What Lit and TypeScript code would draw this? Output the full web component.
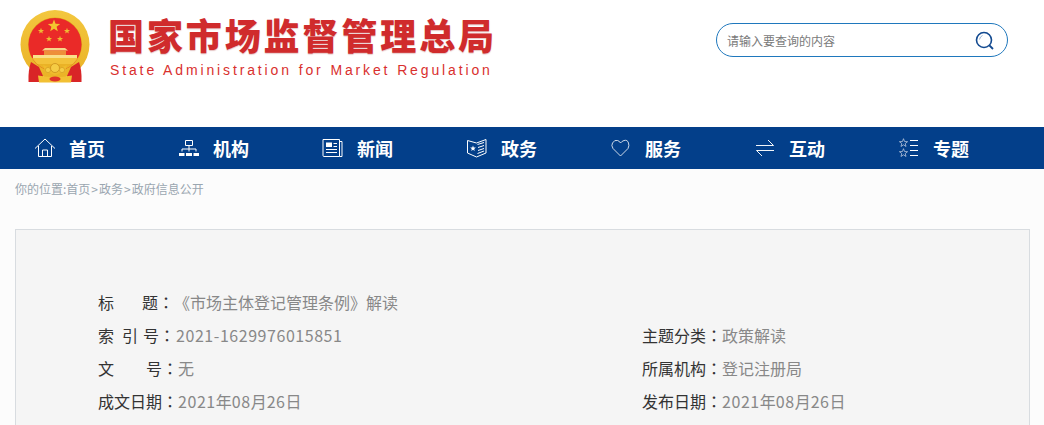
import { LitElement, html, css, svg } from "lit";
import { customElement } from "lit/decorators.js";

const S = (d: string, extra = "") => svg`<path d=${d} fill="none" stroke="#fff" stroke-width="1" opacity=${extra || "1"}/>`;
const star = (cx: number, cy: number, r: number, fill: string, stroke = "none") => {
  const pts: string[] = [];
  for (let i = 0; i < 10; i++) {
    const a = -Math.PI / 2 + (i * Math.PI) / 5;
    const rr = i % 2 ? r * 0.42 : r;
    pts.push(`${(cx + rr * Math.cos(a)).toFixed(2)},${(cy + rr * Math.sin(a)).toFixed(2)}`);
  }
  return svg`<polygon points=${pts.join(" ")} fill=${fill} stroke=${stroke} stroke-width="0.8"/>`;
};

const icons = [
  svg`<svg class="ic" width="22" height="20" viewBox="0 0 22 20">${S("M1 10.500 11 1l10 9.500")}${S("M4.500 8v10.500h13V8")}${S("M8.500 18.500v-6.500h5v6.500")}</svg>`,
  svg`<svg class="ic" width="22" height="20" viewBox="0 0 22 20">${S("M7.500 2.500h7v5h-7z")}${S("M11 7.500v6M4 13.500v-2.500h14v2.500")}<rect x="1" y="15" width="5.500" height="3" fill="#fff"/><rect x="8" y="15" width="6" height="3" fill="#fff"/><rect x="15.500" y="15" width="5.500" height="3" fill="#fff"/></svg>`,
  svg`<svg class="ic" width="22" height="20" viewBox="0 0 22 20">${S("M17.500 18.500H2q-1 0-1-1V1.500h16.500z")}${S("M17.500 3.500h2.500v15h-2.500")}<rect x="4" y="4.500" width="6" height="4.500" fill="#fff"/>${S("M11.500 5.500h3.500M11.500 8.500h3.500M4 11.500h11M4 14.500h11")}</svg>`,
  svg`<svg class="ic" width="22" height="20" viewBox="0 0 22 20">${S("M1.500 2.500 10.500 5 20 1.500V15L10.500 19 1.500 15z")}${star(7, 10.500, 3, "#fff")}${S("M11.500 6.500 18 4.500M12 9.500l6-2M12 12.500l6-2M11.500 15.500l6.500-2.500")}</svg>`,
  svg`<svg class="ic" width="22" height="20" viewBox="0 0 22 20">${S("M10.500 18 3 10.500Q1 7.500 2.500 5 4.500 1.500 7.500 2.500 9.500 3 10.500 5 12 3 14 2.500 17.500 1.500 18.500 5 19.500 7.500 18 10.500z", "0.8")}</svg>`,
  svg`<svg class="ic" width="22" height="20" viewBox="0 0 22 20">${S("M2 7.500h17.500L14 2", "0.95")}${S("M20 12.500H2.500L8 18", "0.95")}</svg>`,
  svg`<svg class="ic" width="22" height="20" viewBox="0 0 22 20">${star(5.500, 5, 4.300, "none", "#b9c7dc")}${star(5.500, 15, 4.300, "none", "#b9c7dc")}${S("M12 2.500h8M12 7.500h8M12 12.500h8M12 17.500h8", "1")}</svg>`,
];

const navItems = ["首页", "机构", "新闻", "政务", "服务", "互动", "专题"];

const emblem = svg`<svg class="emblem" width="70" height="74" viewBox="0 0 70 74">
  <defs>
    <linearGradient id="gold" x1="0" y1="0" x2="0" y2="1"><stop offset="0" stop-color="#f3c73f"/><stop offset="1" stop-color="#eab226"/></linearGradient>
    <clipPath id="disk"><circle cx="35" cy="34.500" r="26.500"/></clipPath>
  </defs>
  <circle cx="35" cy="34.500" r="34.500" fill="url(#gold)"/>
  <circle cx="35" cy="34.500" r="27" fill="#dfa01c"/>
  <circle cx="35" cy="34.500" r="26.500" fill="#ea2a28"/>
  ${star(34, 16, 6.500, "#f3c52f")}
  ${star(21, 21, 3.200, "#efbb33")}
  ${star(47, 21, 3.200, "#efbb33")}
  ${star(29, 29, 3.200, "#efbb33")}
  ${star(40, 29, 3.200, "#efbb33")}
  <g clip-path="url(#disk)">
    <path d="M25 38h20l3 2.500H22z" fill="#f7d68a"/>
    <path d="M24 40.500h22V45H24z" fill="#ee8f3a"/>
    <path d="M13 45h44v3H13z" fill="#fae08a"/>
    <path d="M11 48h48v6H11z" fill="#f3c23a"/>
    <path d="M0 54h70v14H0z" fill="#eab226"/>
  </g>
  <path d="M11 52q-3 8-2.500 20H21l2-6-4-9z" fill="#d92527"/>
  <path d="M59 52q3 8 2.500 20H49l-2-6 4-9z" fill="#d92527"/>
  <path d="M23 55q12 6 24 0l-2 6-10 4-10-4z" fill="#f0bb2c"/>
  <circle cx="35" cy="58" r="4.500" fill="#f5cc45" stroke="#c98e1d" stroke-width="0.800"/>
  <circle cx="28" cy="60" r="2.600" fill="#f5cc45" stroke="#c98e1d" stroke-width="0.500"/>
  <circle cx="42" cy="60" r="2.600" fill="#f5cc45" stroke="#c98e1d" stroke-width="0.500"/>
  <path d="M18 65.500q17 3 34 0l-1 7H19z" fill="#f2c033"/>
  <ellipse cx="35" cy="69" rx="5.500" ry="2.400" fill="#e0322a"/>
</svg>`;

@customElement("app-root")
export class AppRoot extends LitElement {
  static styles = css`
    :host {
      display: block;
      width: 1044px;
      height: 425px;
      overflow: hidden;
      background: #fcfcfc;
      font-family: "Noto Sans CJK SC", "Liberation Sans", sans-serif;
    }
    .header {
      height: 127px;
      background: #fff;
      box-sizing: border-box;
      padding: 7px 36px 0 20px;
      display: flex;
      justify-content: space-between;
      align-items: flex-start;
    }
    .brand {
      display: flex;
      gap: 18px;
      padding-top: 2px;
    }
    .emblem {
      display: block;
      margin-top: 1px;
    }
    .names {
      display: flex;
      flex-direction: column;
    }
    .cn {
      font-size: 36px;
      line-height: 50px;
      font-weight: 900;
      letter-spacing: 2.900px;
      color: #d02b2c;
      text-shadow: 0 1px 1px rgba(150, 20, 20, 0.25);
      white-space: nowrap;
    }
    .en {
      font-family: "Liberation Sans", sans-serif;
      font-size: 14px;
      line-height: 16px;
      margin-top: 3px;
      letter-spacing: 2.870px;
      color: #d9302e;
      padding-left: 2px;
      white-space: nowrap;
    }
    .search {
      width: 292px;
      height: 34px;
      margin-top: 16px;
      box-sizing: border-box;
      border: 1px solid #1f78bd;
      border-radius: 17px;
      display: flex;
      align-items: center;
      justify-content: space-between;
      padding: 0 11px 0 10px;
      font-size: 12px;
      color: #7a7a7a;
    }
    .search svg {
      display: block;
      margin-top: 2px;
    }
    .nav {
      height: 42px;
      background: #033f8a;
      display: flex;
      padding-left: 34px;
    }
    .item {
      width: 144px;
      flex: none;
      display: flex;
      align-items: center;
      color: #fff;
      font-size: 18px;
      font-weight: 700;
    }
    .ic {
      display: block;
      width: 22px;
      margin-right: 13px;
      flex: none;
    }
    .crumb {
      height: 60px;
      box-sizing: border-box;
      padding: 11px 0 0 15px;
      font-size: 12px;
      line-height: 18px;
      color: #9aa6b0;
    }
    .sep {
      margin: 0 1px;
    }
    .card {
      margin: 0 14px 0 15px;
      height: 400px;
      box-sizing: border-box;
      background: #f5f5f5;
      border: 1px solid #d8dce0;
      padding: 55px 82px 0;
      display: grid;
      grid-template-columns: 544px 1fr;
      grid-auto-rows: 33px;
      font-size: 16px;
      color: #333;
    }
    .row {
      display: flex;
      align-items: center;
      white-space: pre;
    }
    .wide {
      grid-column: 1 / -1;
    }
    .colon {
      font-family: "Noto Sans CJK TC", sans-serif;
    }
    .val {
      color: #888;
    }
    .num {
      letter-spacing: 0.550px;
    }
    .l {
      display: flex;
    }
    .g28 { width: 28px; }
    .g8 { width: 8px; }
    .g5 { width: 5px; }
    .g32 { width: 32px; }
    .nudge {
      margin-left: 1px;
    }
  `;

  private row(label: unknown, val: unknown, cls = "", vcls = "") {
    return html`<div class="row ${cls}">${label}<span class="colon">：</span><span class="val ${vcls}">${val}</span></div>`;
  }

  private date() {
    return html`<span class="num">2021</span>年<span class="num">08</span>月<span class="num">26</span>日`;
  }

  render() {
    return html`
      <div class="header">
        <div class="brand">
          ${emblem}
          <div class="names">
            <div class="cn">国家市场监督管理总局</div>
            <div class="en">State Administration for Market Regulation</div>
          </div>
        </div>
        <div class="search">
          <span>请输入要查询的内容</span>
          <svg width="22" height="22" viewBox="0 0 22 22">
            <circle cx="10" cy="10" r="7.500" fill="none" stroke="#134a90" stroke-width="1.600"/>
            <path d="M15.500 15.500 19 19" stroke="#134a90" stroke-width="1.800" fill="none"/>
            <path d="M5.500 9.500Q6 6.500 8.500 5.500" stroke="#9ab4d4" stroke-width="1" fill="none"/>
          </svg>
        </div>
      </div>
      <div class="nav">
        ${navItems.map((n, i) => html`<div class="item">${icons[i]}<span>${n}</span></div>`)}
      </div>
      <div class="crumb">你的位置:首页<span class="sep">&gt;</span>政务<span class="sep">&gt;</span>政府信息公开</div>
      <div class="card">
        ${this.row(html`<span class="l"><span>标</span><span class="g28"></span><span>题</span></span>`, "《市场主体登记管理条例》解读", "wide")}
        ${this.row(html`<span class="l"><span>索</span><span class="g8"></span><span>引</span><span class="g5"></span><span>号</span></span>`, html`<span class="num">2021-1629976015851</span>`, "", "nudge")}
        ${this.row("主题分类", "政策解读")}
        ${this.row(html`<span class="l"><span>文</span><span class="g32"></span><span>号</span></span>`, "无")}
        ${this.row("所属机构", "登记注册局")}
        ${this.row("成文日期", this.date())}
        ${this.row("发布日期", this.date())}
      </div>
    `;
  }
}
